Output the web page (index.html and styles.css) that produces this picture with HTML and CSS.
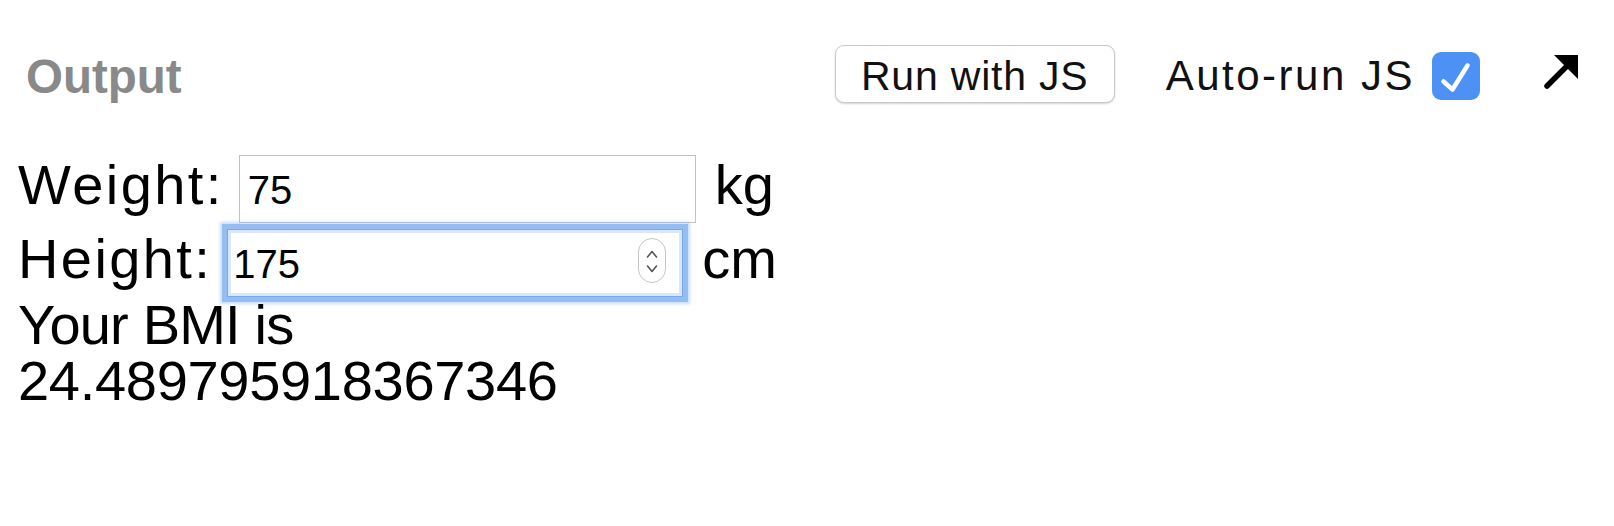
FILE: index.html
```html
<!DOCTYPE html>
<html>
<head>
<meta charset="utf-8">
<link rel="stylesheet" href="styles.css">
</head>
<body>
<header class="bar">
  <div class="title">Output</div>
  <div class="tools">
    <button class="run">Run with JS</button>
    <span class="auto">Auto-run JS</span>
    <svg class="check" width="48" height="48" viewBox="0 0 48 48">
      <rect x="0" y="0" width="48" height="48" rx="9" fill="#4c91f3"/>
      <path d="M11.5 29.5 L20.5 37.5 L35.5 13.5" fill="none" stroke="#fff" stroke-width="4.5" stroke-linecap="round" stroke-linejoin="round"/>
    </svg>
    <svg class="popout" width="36" height="36" viewBox="0 0 36 36">
      <path d="M4 32 L24 12" stroke="#000" stroke-width="5.5" stroke-linecap="round"/>
      <polygon points="11,1 35,1 35,25" fill="#000"/>
    </svg>
  </div>
</header>
<main class="out">
  <div class="row">
    <span class="label">Weight:</span>
    <div class="field">
      <input class="val" type="text" value="75">
    </div>
    <span class="unit">kg</span>
  </div>
  <div class="row row2">
    <span class="label">Height:</span>
    <div class="field focus">
      <input class="val tight" type="text" value="175">
      <svg class="spin" width="28" height="45" viewBox="0 0 28 45">
        <rect x="0.5" y="0.5" width="27" height="44" rx="13.5" fill="#fff" stroke="#c6c6c6"/>
        <path d="M9.5 19 L14 13.5 L18.5 19" fill="none" stroke="#555" stroke-width="1.6" stroke-linecap="round" stroke-linejoin="round"/>
        <path d="M9.5 28 L14 33.5 L18.5 28" fill="none" stroke="#555" stroke-width="1.6" stroke-linecap="round" stroke-linejoin="round"/>
      </svg>
    </div>
    <span class="unit">cm</span>
  </div>
  <p class="result">Your BMI is<br><span class="number">24.489795918367346</span></p>
</main>
</body>
</html>
```
FILE: styles.css
```css
html, body {
  margin: 0;
  padding: 0;
  background: #fff;
}
body {
  font-family: "Liberation Sans", Arial, sans-serif;
  color: #000;
}
.bar {
  display: flex;
  align-items: center;
  height: 58px;
  margin-top: 45px;
  padding: 0 35px 0 26px;
}
.title {
  font-weight: bold;
  font-size: 47.5px;
  color: #898989;
  padding-top: 4px;
}
.tools {
  margin-left: auto;
  display: flex;
  align-items: center;
}
.run {
  width: 280px;
  height: 58px;
  box-sizing: border-box;
  background: #fff;
  border: 1px solid #c9c9c9;
  border-radius: 9px;
  box-shadow: 0 1px 2px rgba(0,0,0,0.18);
  font-family: "Liberation Sans", Arial, sans-serif;
  font-size: 41px;
  letter-spacing: 0.8px;
  color: #111;
  padding: 4px 0 0;
  margin: 0;
}
.auto {
  font-size: 42px;
  letter-spacing: 2.5px;
  color: #111;
  margin-left: 51px;
  padding-top: 4px;
}
.check {
  display: block;
  margin-left: 17px;
  margin-top: 4px;
}
.popout {
  display: block;
  margin-left: 63px;
  margin-top: -4px;
}
.out {
  margin-top: 52px;
  padding-left: 18px;
}
.row {
  display: flex;
  align-items: baseline;
}
.row2 {
  margin-top: 6px;
}
.label {
  font-size: 56px;
  line-height: 56px;
  letter-spacing: 2.4px;
  margin-right: 15px;
}
.unit {
  font-size: 56px;
  line-height: 56px;
  margin-left: 19px;
}
.field {
  display: flex;
  align-items: center;
  width: 457px;
  height: 68px;
  box-sizing: border-box;
  border: 1px solid #c2c2c2;
  background: #fff;
}
.field.focus {
  width: 456px;
  border-color: #78a8ec;
  box-shadow: 0 0 0 5px #93bdf3, 0 0 3px 7px rgba(147,189,243,0.5), inset 0 0 0 3px #d9e7fb;
  padding-right: 16px;
}
.val {
  flex: 1;
  min-width: 0;
  height: 66px;
  border: none;
  outline: none;
  background: transparent;
  font-family: "Liberation Sans", Arial, sans-serif;
  font-size: 40px;
  color: #000;
  padding: 2px 8px 0;
  margin: 0;
}
.val.tight {
  padding-left: 5px;
}
.spin {
  display: block;
  flex: none;
  margin-bottom: 5px;
}
.result {
  margin: 0;
  font-size: 56px;
  line-height: 56px;
  letter-spacing: -0.8px;
}
.number {
  letter-spacing: -0.3px;
}
```
